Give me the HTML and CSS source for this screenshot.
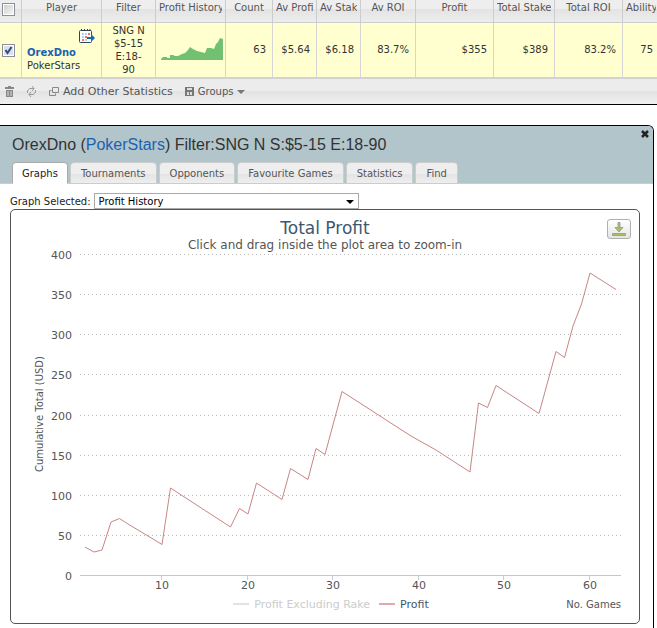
FILE: index.html
```
<!DOCTYPE html>
<html lang="en">
<head>
  <meta charset="UTF-8">
  <title>OrexDno - Player Statistics</title>
  <link rel="stylesheet" href="styles.css">
</head>
<body>
  <section class="results">
    <table class="stats">
      <colgroup>
        <col class="col-check"><col class="col-player"><col class="col-filter"><col class="col-history">
        <col class="col-count"><col class="col-av"><col class="col-av"><col class="col-roi">
        <col class="col-profit"><col class="col-stake"><col class="col-total"><col>
      </colgroup>
      <thead>
        <tr>
          <th class="check"><input type="checkbox" aria-label="Select all"></th>
          <th>Player</th>
          <th>Filter</th>
          <th class="cut"><span>Profit History</span></th>
          <th>Count</th>
          <th class="cut"><span>Av Profit</span></th>
          <th class="cut"><span>Av Stake</span></th>
          <th>Av ROI</th>
          <th>Profit</th>
          <th class="cut"><span>Total Stake</span></th>
          <th>Total ROI</th>
          <th class="cut"><span>Ability</span></th>
        </tr>
      </thead>
      <tbody>
        <tr>
          <td class="check"><input type="checkbox" aria-label="Select OrexDno" checked></td>
          <td class="player">
            <svg class="calendar" width="17" height="16" viewBox="0 0 17 16">
              <rect x=".5" y="1.500" width="12" height="12" rx="1" fill="#fff" stroke="#345"/>
              <path d="M2.500 0v2M5.500 0v2M8.500 0v2M11 0v2" stroke="#345"/>
              <path d="M3 5h2M6 5h2M3 8h2M6 11h2" stroke="#a8d4ee" stroke-width="2"/>
              <path d="M9 5h2M6 8h2M3 11h2" stroke="#e87860" stroke-width="2"/>
              <path d="M8 8h4V5l4 4-4 4v-3H8z" fill="#1a6aa8"/>
            </svg>
            <a class="name" href="#player">OrexDno</a>
            <span>PokerStars</span>
          </td>
          <td class="filter">SNG N $5-15 E:18-90</td>
          <td class="history">
            <svg width="62" height="23" viewBox="0 0 62 23">
              <path fill="#72c072" d="M0 22V21L2 19H6V20H9V17H12L14 18H17L21 16L24 15L27 12L29 9L32 11L36 13L44 15L46 10H50L53 11L55 6L57 4L59 0L62 1V22z"/>
            </svg>
          </td>
          <td>63</td>
          <td>$5.64</td>
          <td>$6.18</td>
          <td>83.7%</td>
          <td>$355</td>
          <td>$389</td>
          <td>83.2%</td>
          <td>75</td>
        </tr>
      </tbody>
    </table>
    <div class="toolbar">
      <button class="tool" type="button" aria-label="Delete">
        <svg width="9" height="11" viewBox="0 0 9 11"><path fill="#888" d="M3 0h3v1h3v2H0V1h3zM1 4h7v7H1z"/><path d="M3 5v5M6 5v5" stroke="#ddd"/></svg>
      </button>
      <button class="tool" type="button" aria-label="Refresh">
        <svg width="11" height="11" viewBox="0 0 11 11"><path d="M1.500 7V5l2-2.500H8M6 0l2 2.500L6 5M9.500 4v2l-2 2.500H3M5 6L3 8.500 5 11" fill="none" stroke="#999"/></svg>
      </button>
      <button class="tool add" type="button">
        <svg width="10" height="9" viewBox="0 0 10 9"><path d="M3.500.5h6v5h-6zM2.500 3.500h-2v5h6v-2" fill="none" stroke="#888"/></svg>
        Add Other Statistics
      </button>
      <button class="tool groups" type="button">
        <svg width="9" height="9" viewBox="0 0 9 9"><path fill="#777" d="M0 0h9v9H0z"/><path fill="#ddd" d="M2 1h5v2H2zM2 5h2v3H2zM5 5h2v3H5z"/></svg>
        Groups
        <span class="caret"></span>
      </button>
    </div>
  </section>

  <section class="panel">
    <header class="panel-head">
      <button class="close" type="button" aria-label="Close">
        <svg width="8" height="8" viewBox="0 0 8 8"><path d="M1 1l6 6M7 1L1 7" stroke="#222" stroke-width="2.500"/></svg>
      </button>
      <h1>OrexDno (<a href="#network">PokerStars</a>) Filter:SNG N S:$5-15 E:18-90</h1>
      <nav class="tabs">
        <button class="tab active" type="button">Graphs</button>
        <button class="tab" type="button">Tournaments</button>
        <button class="tab" type="button">Opponents</button>
        <button class="tab" type="button">Favourite Games</button>
        <button class="tab" type="button">Statistics</button>
        <button class="tab" type="button">Find</button>
      </nav>
    </header>

    <div class="picker">
      <label for="graph">Graph Selected:</label>
      <span class="select">
        <select id="graph">
          <option>Profit History</option>
        </select>
      </span>
    </div>

    <div class="chart">
      <button class="export" type="button" aria-label="Download chart">
        <svg width="14" height="14" viewBox="0 0 14 14"><path d="M6 .5h2v5h3L7 10 3 5.500h3zM.5 11.500h13v2H.5z" fill="#a8c060" stroke="#a0a0a0"/></svg>
      </button>
      <h2>Total Profit</h2>
      <p>Click and drag inside the plot area to zoom-in</p>
      <svg class="plot" viewBox="0 0 628 344">
        <path class="grid" d="M69 2.500h541M69 42.500h541M69 82.500h541M69 122.500h541M69 163.500h541M69 203.500h541M69 243.500h541M69 283.500h541"/>
        <path class="axis" d="M69 323.500h541"/>
        <path class="ticks" d="M150.500 324v4M236.500 324v4M321.500 324v4M407.500 324v4M492.500 324v4M578.500 324v4"/>
        <g class="y-labels">
          <text x="61" y="7">400</text>
          <text x="61" y="47">350</text>
          <text x="61" y="87">300</text>
          <text x="61" y="127">250</text>
          <text x="61" y="168">200</text>
          <text x="61" y="208">150</text>
          <text x="61" y="248">100</text>
          <text x="61" y="288">50</text>
          <text x="61" y="328">0</text>
        </g>
        <g class="x-labels">
          <text x="151" y="337">10</text>
          <text x="237" y="337">20</text>
          <text x="322" y="337">30</text>
          <text x="408" y="337">40</text>
          <text x="493" y="337">50</text>
          <text x="579" y="337">60</text>
        </g>
        <text class="y-title" transform="translate(32 162) rotate(-90)">Cumulative Total (USD)</text>
        <polyline class="profit" points="74,295 83,300 91,298 100,270 108.500,266.500 117,272 142,287 151,292.500 159.500,236 219.500,275 228.500,256.500 237,262 245.500,231 271,247.500 279.500,216.500 297,227.500 305,196.500 314,202.500 331,139.500 400,184 425,198 459,220 467.500,151 476.500,155.500 485,133.500 528,161.500 545,99.500 553.500,105.500 562,74 570.500,52 579,21 605,37.500"/>
      </svg>
      <div class="chart-foot">
        <div class="legend">
          <button class="key off" type="button">Profit Excluding Rake</button>
          <button class="key" type="button">Profit</button>
        </div>
        <span class="x-title">No. Games</span>
      </div>
    </div>
  </section>
</body>
</html>
```

FILE: styles.css
```
* {
  box-sizing: border-box;
}

body {
  display: flex;
  flex-direction: column;
  min-height: 100vh;
  margin: 0;
  overflow-x: hidden;
  background: #fff;
  color: #333;
  font: 10px/13px "DejaVu Sans", Verdana, sans-serif;
}

button {
  padding: 0;
  border: 0;
  background: none;
  color: inherit;
  font: inherit;
  cursor: pointer;
}

svg {
  display: block;
}

a {
  color: #1a62b0;
  text-decoration: none;
}

.results {
  overflow: hidden;
  border-bottom: 1px solid #000;
}

/* player table */
.stats {
  width: 100%;
  min-width: 660px;
  table-layout: fixed;
  border-collapse: separate;
  border-spacing: 0;
}

.col-check { width: 22px; }
.col-player { width: 80px; }
.col-filter { width: 54px; }
.col-history { width: 70px; }
.col-count { width: 47px; }
.col-av { width: 44px; }
.col-roi { width: 55px; }
.col-profit { width: 78px; }
.col-stake { width: 61px; }
.col-total { width: 68px; }

.stats th {
  height: 23px;
  padding: 0 3px 8px;
  border-right: 1px solid #ccc;
  border-bottom: 1px solid #ccc;
  background: linear-gradient(#eee 9px, #e3e3e3 9px, #ededed);
  color: #555;
  font-weight: normal;
  white-space: nowrap;
}

.cut span {
  display: block;
  overflow: hidden;
  text-align: left;
}

.stats td {
  height: 56px;
  padding: 0 6px 2px 5px;
  border-right: 1px solid #d5d5d5;
  border-bottom: 2px solid #d2d2d2;
  background: #ffffd0;
  text-align: right;
}

.stats .check {
  padding: 0;
}

.stats th.check {
  padding-bottom: 3px;
}

.check input {
  appearance: none;
  display: block;
  width: 13px;
  height: 13px;
  margin: 0 0 0 2px;
  border: 1px solid #8a8f98;
  background: linear-gradient(135deg, #ccc, #f8f8f8);
  box-shadow: inset 0 0 0 1px #fff;
}

.check input:checked {
  background: url("data:image/svg+xml,%3Csvg xmlns='http://www.w3.org/2000/svg' viewBox='0 0 11 11'%3E%3Cpath d='M2.500 5l2 3 4-6' fill='none' stroke='%232c4a80' stroke-width='2'/%3E%3C/svg%3E") #dcdfe8;
}

.stats .player {
  padding-bottom: 0;
  text-align: left;
}

.player .calendar {
  margin: 0 0 1px 52px;
}

.player .name {
  display: block;
  color: #1a62b0;
  font-weight: bold;
}

.stats .filter {
  padding: 0 9px;
  text-align: center;
}

/* row of actions under the table */
.toolbar {
  display: flex;
  align-items: center;
  height: 25px;
  padding-left: 5px;
  background: linear-gradient(#ececec 12px, #e2e2e2 12px, #f0f0f0);
  color: #555;
}

.tool {
  display: flex;
  align-items: center;
  gap: 4px;
  margin-right: 12px;
}

.add {
  font-size: 11px;
}

.caret {
  border: 4px solid transparent;
  border-top-color: #777;
  border-bottom: 0;
}

/* player panel */
.panel {
  flex: 1;
  margin: 20px 3px 0 0;
  padding-bottom: 3px;
  border: 1px solid #000;
  border-width: 1px 1px 0 0;
  border-radius: 0 6px 0 0;
}

.panel-head {
  position: relative;
  padding: 8px 12px 0;
  border-bottom: 1px solid #ccc;
  border-radius: 0 5px 0 0;
  background: #b2c5cb;
}

.close {
  position: absolute;
  top: 4px;
  right: 4px;
}

.panel h1 {
  margin: 0;
  font: 16px/22px "Liberation Sans", Arial, sans-serif;
}

.tabs {
  display: flex;
  gap: 2px;
  margin: 6px 0 -1px;
}

.tab {
  height: 22px;
  padding: 0 10px;
  border: 1px solid #ccc;
  border-bottom-color: #ccc;
  border-radius: 4px 4px 0 0;
  background: linear-gradient(#eee 11px, #e4e4e4 11px, #eee);
  color: #555;
}

.tab.active {
  padding: 0 9px;
  border-color: #aaa;
  border-bottom-color: #fff;
  background: #fff;
  color: #222;
}

.picker {
  display: flex;
  align-items: center;
  gap: 3px;
  padding: 9px 10px 0;
  color: #222;
}

.select {
  position: relative;
  flex: 0 1 265px;
}

.select::after {
  content: "";
  position: absolute;
  top: 7px;
  right: 5px;
  border: 4px solid transparent;
  border-top-color: #000;
  border-bottom: 0;
  pointer-events: none;
}

.select select {
  appearance: none;
  display: block;
  width: 100%;
  height: 16px;
  padding: 0 4px;
  border: 1px solid #aaa;
  border-radius: 0;
  background: #fff;
  color: #000;
  font: inherit;
}

/* chart */
.chart {
  position: relative;
  margin: 0 13px 0 10px;
  padding: 8px 0 11px;
  border: 1px solid #555;
  border-radius: 5px;
}

.export {
  position: absolute;
  top: 9px;
  right: 8px;
  display: flex;
  align-items: center;
  justify-content: center;
  width: 24px;
  height: 20px;
  border: 1px solid #b0b0b0;
  border-radius: 3px;
  background: linear-gradient(#fff, #e4e4e4);
}

.chart h2 {
  margin: 0;
  color: #3e576f;
  font-size: 17px;
  font-weight: normal;
  line-height: 20px;
  text-align: center;
}

.chart p {
  margin: 0;
  color: #555;
  font-size: 12px;
  line-height: 14px;
  text-align: center;
}

.plot {
  width: 100%;
  overflow: visible;
}

.grid {
  fill: none;
  stroke: #bbb;
  stroke-dasharray: 1 3;
}

.axis {
  stroke: #c0c8d0;
}

.ticks {
  stroke: #c0d0e0;
}

.y-labels,
.x-labels {
  fill: #555;
  font-size: 11px;
  text-anchor: end;
}

.x-labels,
.y-title {
  text-anchor: middle;
}

.y-title {
  fill: #555;
  font-size: 10px;
}

.profit {
  fill: none;
  stroke: #c98585;
}

.chart-foot {
  display: grid;
  grid-template-columns: 1fr auto 1fr;
  align-items: center;
  height: 16px;
  padding: 0 18px 0 30px;
}

.legend {
  display: flex;
  grid-column: 2;
  gap: 9px;
}

.key {
  display: flex;
  align-items: center;
  gap: 5px;
  color: #3e576f;
  font-size: 11px;
}

.key::before {
  content: "";
  width: 16px;
  height: 2px;
  background: #dcacac;
}

.key.off {
  color: #ccc;
}

.key.off::before {
  background: #e2e2e2;
}

.x-title {
  color: #555;
  text-align: right;
}
```
